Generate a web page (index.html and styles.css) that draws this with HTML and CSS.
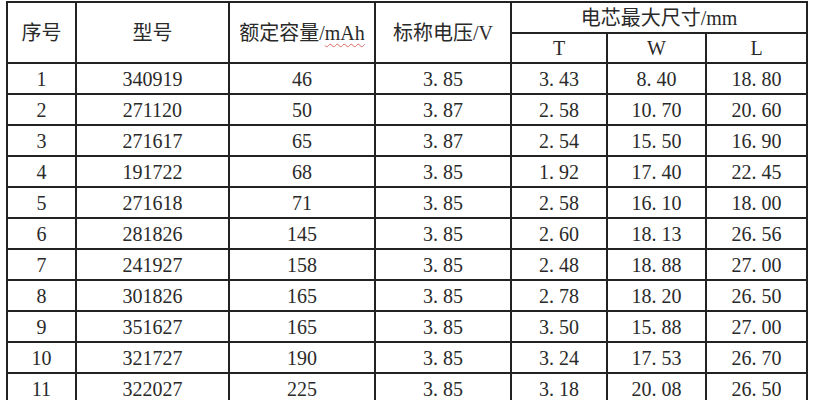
FILE: index.html
```html
<!DOCTYPE html>
<html lang="zh">
<head>
<meta charset="utf-8">
<link rel="stylesheet" href="styles.css">
</head>
<body>
<table class="spec">
  <colgroup>
    <col class="c1"><col class="c2"><col class="c3"><col class="c4"><col class="c5"><col class="c6"><col class="c7">
  </colgroup>
  <thead>
    <tr class="h1">
      <th rowspan="2">序号</th>
      <th rowspan="2">型号</th>
      <th rowspan="2">额定容量/<span class="spell">mAh</span></th>
      <th rowspan="2">标称电压/V</th>
      <th colspan="3">电芯最大尺寸/mm</th>
    </tr>
    <tr class="h2">
      <th>T</th><th>W</th><th>L</th>
    </tr>
  </thead>
  <tbody>
    <tr><td>1</td><td>340919</td><td>46</td><td>3<b>.</b>85</td><td>3<b>.</b>43</td><td>8<b>.</b>40</td><td>18<b>.</b>80</td></tr>
    <tr><td>2</td><td>271120</td><td>50</td><td>3<b>.</b>87</td><td>2<b>.</b>58</td><td>10<b>.</b>70</td><td>20<b>.</b>60</td></tr>
    <tr><td>3</td><td>271617</td><td>65</td><td>3<b>.</b>87</td><td>2<b>.</b>54</td><td>15<b>.</b>50</td><td>16<b>.</b>90</td></tr>
    <tr><td>4</td><td>191722</td><td>68</td><td>3<b>.</b>85</td><td>1<b>.</b>92</td><td>17<b>.</b>40</td><td>22<b>.</b>45</td></tr>
    <tr><td>5</td><td>271618</td><td>71</td><td>3<b>.</b>85</td><td>2<b>.</b>58</td><td>16<b>.</b>10</td><td>18<b>.</b>00</td></tr>
    <tr><td>6</td><td>281826</td><td>145</td><td>3<b>.</b>85</td><td>2<b>.</b>60</td><td>18<b>.</b>13</td><td>26<b>.</b>56</td></tr>
    <tr><td>7</td><td>241927</td><td>158</td><td>3<b>.</b>85</td><td>2<b>.</b>48</td><td>18<b>.</b>88</td><td>27<b>.</b>00</td></tr>
    <tr><td>8</td><td>301826</td><td>165</td><td>3<b>.</b>85</td><td>2<b>.</b>78</td><td>18<b>.</b>20</td><td>26<b>.</b>50</td></tr>
    <tr><td>9</td><td>351627</td><td>165</td><td>3<b>.</b>85</td><td>3<b>.</b>50</td><td>15<b>.</b>88</td><td>27<b>.</b>00</td></tr>
    <tr><td>10</td><td>321727</td><td>190</td><td>3<b>.</b>85</td><td>3<b>.</b>24</td><td>17<b>.</b>53</td><td>26<b>.</b>70</td></tr>
    <tr><td>11</td><td>322027</td><td>225</td><td>3<b>.</b>85</td><td>3<b>.</b>18</td><td>20<b>.</b>08</td><td>26<b>.</b>50</td></tr>
  </tbody>
</table>
</body>
</html>
```
FILE: styles.css
```css
html, body {
  margin: 0;
  padding: 0;
  background: #fff;
}
body {
  padding: 1px 0 0 6px;
  font-family: "Liberation Serif", "Noto Sans CJK SC", serif;
  color: #2a2a2a;
}
.spec {
  border-collapse: collapse;
  table-layout: fixed;
  width: 802px;
  font-size: 20px;
}
.c1 { width: 69px; }
.c2 { width: 153px; }
.c3 { width: 146px; }
.c4 { width: 136px; }
.c5 { width: 96px; }
.c6 { width: 99px; }
.c7 { width: 101px; }
.spec th, .spec td {
  border: 2px solid #222;
  padding: 0;
  text-align: center;
  vertical-align: middle;
  font-weight: normal;
  line-height: 20px;
}
.spec td { height: 29px; }
.spec td b {
  font-weight: normal;
  padding-right: 5px;
}
.h1 th { height: 29px; }
.h2 th { height: 28px; }
.spell {
  text-decoration: underline wavy #d66;
  text-decoration-thickness: 1px;
  text-underline-offset: 3px;
}
```
